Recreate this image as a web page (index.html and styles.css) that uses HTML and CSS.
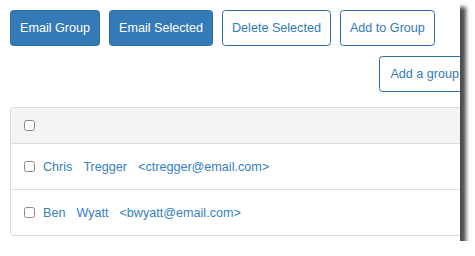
FILE: index.html
```html
<!DOCTYPE html>
<html lang="en">
<head>
    <meta charset="UTF-8">
    <meta name="viewport" content="width=device-width, initial-scale=1.0">
    <title>Contacts</title>
    <link rel="stylesheet" href="styles.css">
</head>
<body>
    <div class="frame">
        <div class="page">
            <div class="toolbar">
                <button class="btn btn-primary">Email Group</button>
                <button class="btn btn-primary">Email Selected</button>
                <button class="btn btn-outline">Delete Selected</button>
                <button class="btn btn-outline">Add to Group</button>
            </div>

            <div class="group-bar">
                <button class="btn btn-outline">Add a group</button>
            </div>

            <div class="contacts">
                <div class="contact-row contact-head">
                    <input type="checkbox" class="check" aria-label="Select all">
                </div>
                <div class="contact-row">
                    <input type="checkbox" class="check" aria-label="Select Chris Tregger">
                    <span class="contact-part">Chris</span>
                    <span class="contact-part">Tregger</span>
                    <span class="contact-part">&lt;ctregger@email.com&gt;</span>
                </div>
                <div class="contact-row">
                    <input type="checkbox" class="check" aria-label="Select Ben Wyatt">
                    <span class="contact-part">Ben</span>
                    <span class="contact-part">Wyatt</span>
                    <span class="contact-part">&lt;bwyatt@email.com&gt;</span>
                </div>
            </div>
        </div>
    </div>
</body>
</html>
```

FILE: styles.css
```css
:root {
    --primary-color: #337ab7;
    --primary-border: #2e6da4;
    --link-color: #3580c0;
    --line-color: #dddddd;
    --head-bg: #f4f4f4;
}

body {
    margin: 0;
    background: #ffffff;
    font-family: "Liberation Sans", Arial, sans-serif;
    font-size: 12.6px;
}

.frame {
    width: 460px;
    height: 241px;
    overflow: hidden;
    background: #ffffff;
    box-shadow: 6px 7px 4px rgba(0, 0, 0, 0.7);
}

.page {
    width: 460px;
    padding: 10px;
}

.toolbar {
    display: flex;
    gap: 9px;
}

.btn {
    height: 36px;
    padding: 0 9px;
    font-family: inherit;
    font-size: 12.6px;
    line-height: 16px;
    border-radius: 3.5px;
    border: 1px solid var(--primary-border);
    cursor: pointer;
}

.btn-primary {
    background: var(--primary-color);
    color: #ffffff;
}

.btn-outline {
    background: #ffffff;
    color: var(--primary-color);
}

.group-bar {
    display: flex;
    justify-content: flex-end;
    margin-top: 10px;
}

.group-bar .btn {
    padding: 0 10px;
}

.contacts {
    margin-top: 15px;
    border: 1px solid var(--line-color);
    border-radius: 3px;
}

.contact-row {
    display: flex;
    align-items: center;
    height: 45px;
    padding-left: 13px;
    border-top: 1px solid var(--line-color);
    color: var(--link-color);
}

.contact-head {
    height: 35px;
    border-top: none;
    background: var(--head-bg);
}

.check {
    appearance: none;
    width: 11px;
    height: 11px;
    margin: 0 8px 0 0;
    border: 1px solid #8a8a8a;
    border-radius: 2.5px;
    background: #ffffff;
}

.contact-part {
    margin-right: 11px;
}
```
